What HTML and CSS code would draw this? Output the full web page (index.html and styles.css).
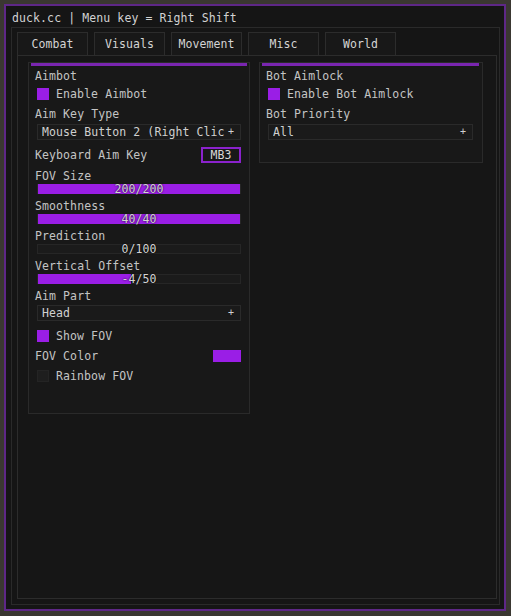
FILE: index.html
```html
<!DOCTYPE html>
<html>
<head>
<meta charset="utf-8">
<link rel="stylesheet" href="styles.css">
</head>
<body>
<div class="window">
  <div class="title">duck.cc | Menu key = Right Shift</div>
  <div class="frame">
    <div class="tabs">
      <div class="tab active">Combat</div>
      <div class="tab">Visuals</div>
      <div class="tab">Movement</div>
      <div class="tab">Misc</div>
      <div class="tab">World</div>
    </div>
    <div class="panel">
      <div class="group left">
        <div class="bar"></div>
        <div class="label first">Aimbot</div>
        <div class="check-row"><span class="box on"></span><span>Enable Aimbot</span></div>
        <div class="label gap6">Aim Key Type</div>
        <div class="dropdown"><span class="dd-text">Mouse Button 2 (Right Clic</span><span class="arrow">+</span></div>
        <div class="key-row"><span class="label-inline">Keyboard Aim Key</span><span class="keybtn">MB3</span></div>
        <div class="label gap6">FOV Size</div>
        <div class="slider"><div class="fill" style="width:100%"></div><span class="val">200/200</span></div>
        <div class="label gap5">Smoothness</div>
        <div class="slider"><div class="fill" style="width:100%"></div><span class="val">40/40</span></div>
        <div class="label gap5">Prediction</div>
        <div class="slider"><div class="fill" style="width:0%"></div><span class="val">0/100</span></div>
        <div class="label gap5">Vertical Offset</div>
        <div class="slider"><div class="fill" style="width:46%"></div><span class="val">-4/50</span></div>
        <div class="label gap5">Aim Part</div>
        <div class="dropdown dd2"><span class="dd-text">Head</span><span class="arrow">+</span></div>
        <div class="check-row mt8"><span class="box on"></span><span>Show FOV</span></div>
        <div class="color-row"><span class="label-inline">FOV Color</span><span class="swatch"></span></div>
        <div class="check-row mt6"><span class="box"></span><span>Rainbow FOV</span></div>
      </div>
      <div class="group right">
        <div class="bar"></div>
        <div class="label first">Bot Aimlock</div>
        <div class="check-row"><span class="box on"></span><span>Enable Bot Aimlock</span></div>
        <div class="label gap6">Bot Priority</div>
        <div class="dropdown"><span class="dd-text">All</span><span class="arrow">+</span></div>
      </div>
    </div>
  </div>
</div>
</body>
</html>
```
FILE: styles.css
```css
* { box-sizing: border-box; }
html, body { margin: 0; padding: 0; }
body {
  background: #3a3731;
  width: 511px;
  height: 616px;
  overflow: hidden;
  font-family: "DejaVu Sans Mono", "Liberation Mono", monospace;
  font-size: 11.5px;
  letter-spacing: 0.1px;
  color: #c4c4c4;
}
.window {
  margin: 4px 0 0 4px;
  width: 502px;
  height: 607px;
  border: 2px solid #5e2787;
  background: #151515;
  display: flex;
  flex-direction: column;
  padding: 0 4px 4px 5px;
}
.title {
  height: 21px;
  padding-top: 1px;
  line-height: 22px;
  padding-left: 1px;
  color: #d2d2d2;
  white-space: nowrap;
}
.frame {
  flex: 1;
  border: 1px solid #2a2a2a;
  padding: 4px 2px 5px 5px;
  display: flex;
  flex-direction: column;
}
.tabs {
  display: flex;
  gap: 6px;
  height: 23px;
}
.tab {
  width: 71px;
  height: 23px;
  border: 1px solid #2c2c2c;
  border-bottom: none;
  background: #181818;
  text-align: center;
  line-height: 22px;
  color: #d4d4d4;
}
.panel {
  flex: 1;
  border: 1px solid #2c2c2c;
  background: #161616;
  display: flex;
  align-items: flex-start;
  gap: 9px;
  padding: 6px 10px 0 10px;
}
.group {
  border: 1px solid #2a2a2a;
  background: #181818;
  display: flex;
  flex-direction: column;
  padding: 0 8px 0 6px;
}
.group.left { width: 222px; padding-bottom: 30px; }
.group.right { width: 224px; padding-bottom: 22px; padding-right: 9px; }
.bar {
  height: 3px;
  background: #7a26b0;
  margin: 0 -6px 0 -4px;
}
.label {
  height: 14px;
  line-height: 14px;
  white-space: nowrap;
}
.label.first { margin-top: 3px; }
.label.gap6 { margin-top: 6px; }
.label.gap5 { margin-top: 5px; }
.check-row {
  display: flex;
  align-items: center;
  gap: 7px;
  height: 14px;
  line-height: 14px;
  margin-top: 4px;
  padding-left: 2px;
  white-space: nowrap;
}
.check-row.mt8 { margin-top: 8px; }
.check-row.mt6 { margin-top: 6px; }
.box {
  width: 12px;
  height: 12px;
  background: #1e1e1e;
  border: 1px solid #242424;
  flex: none;
}
.box.on {
  background: #9a1ee6;
  border-color: #9a1ee6;
}
.dropdown {
  margin-top: 3px;
  margin-left: 2px;
  height: 16px;
  border: 1px solid #2a2a2a;
  background: #1a1a1a;
  display: flex;
  justify-content: space-between;
  align-items: center;
  padding: 0 6px 0 4px;
  line-height: 14px;
  white-space: nowrap;
  overflow: hidden;
  color: #d0d0d0;
}
.dropdown.dd2 { margin-top: 2px; }
.dd-text { overflow: hidden; }
.arrow { font-size: 10px; color: #d0d0d0; flex: none; }
.key-row, .color-row {
  display: flex;
  justify-content: space-between;
  align-items: center;
  white-space: nowrap;
}
.key-row { margin-top: 7px; height: 16px; }
.color-row { margin-top: 6px; height: 14px; }
.keybtn {
  width: 40px;
  height: 16px;
  border: 2px solid #8a22cc;
  background: #181818;
  text-align: center;
  line-height: 12px;
  color: #d8d8d8;
}
.swatch {
  width: 28px;
  height: 12px;
  background: #9a1ee6;
}
.slider {
  position: relative;
  margin-top: 1px;
  margin-left: 2px;
  height: 10px;
  border: 1px solid #262626;
  background: #1b1b1b;
}
.fill {
  position: absolute;
  left: 0;
  top: -1px;
  bottom: -1px;
  background: #9a1ee6;
}
.val {
  position: absolute;
  left: 0;
  right: 0;
  top: -3px;
  text-align: center;
  line-height: 14px;
  color: #d4d4d4;
  text-shadow: 0 0 2px #000;
}
```
